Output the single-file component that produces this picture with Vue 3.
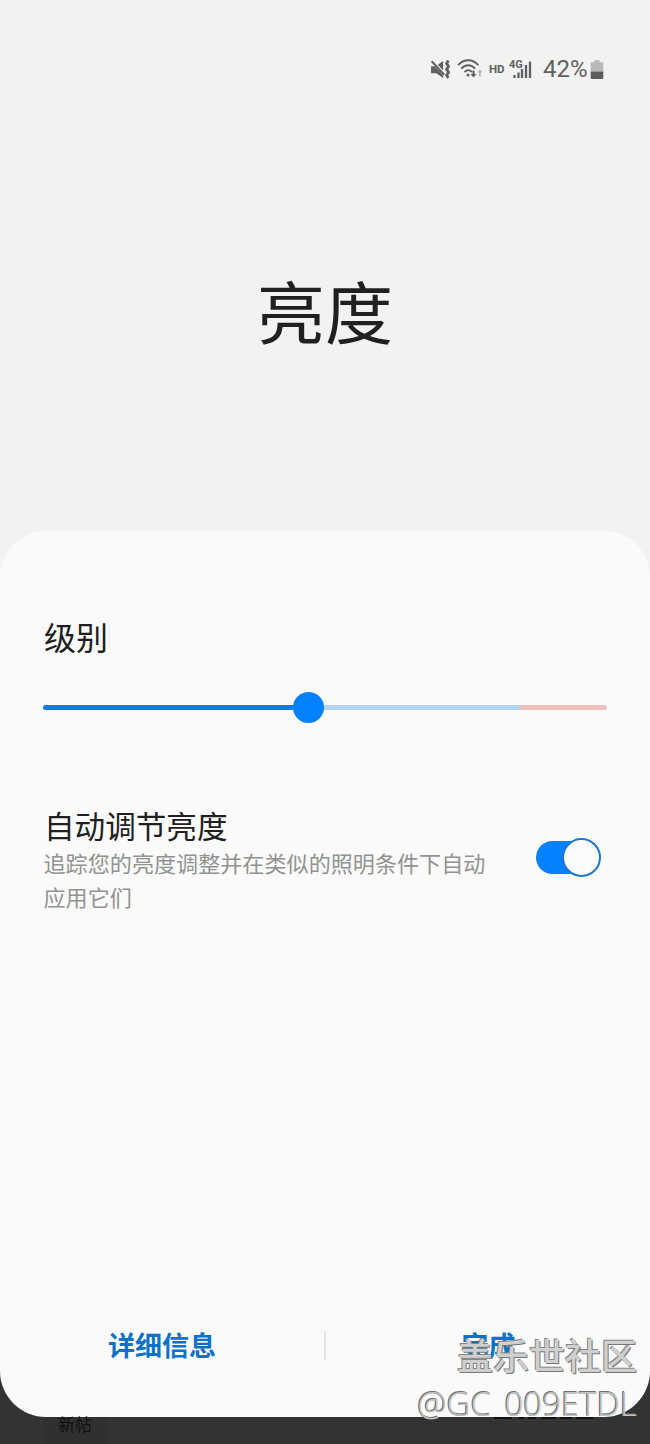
<template>
  <div class="screen">
    <header class="status-bar">
      <svg class="icon mute" viewBox="0 0 20 20" aria-hidden="true">
        <path d="M1 7h3.500l8 8.500V18l-6.500-4.500H1z" fill="#606060" />
        <path d="M7.500 5.500L12.500 2v9z" fill="#606060" />
        <path d="M1.500 2l12 13" stroke="#606060" stroke-width="2" />
        <path d="M17.500 1.500l-1.700 2.800 1.900 2.700-1.900 2.900 1.900 2.700-1.900 2.900 1.700 2.500" fill="none" stroke="#606060" stroke-width="2.600" />
      </svg>
      <svg class="icon wifi" viewBox="0 0 26 20" aria-hidden="true">
        <g fill="none" stroke="#606060" stroke-width="1.900">
          <path d="M1 6.200C7-.4 15.400-.4 21.400 6.200" />
          <path d="M4.200 9.700c4.200-4.700 9.800-4.700 14 0" />
          <path d="M7.500 13c2.400-2.500 5-2.500 7.400 0" />
        </g>
        <circle cx="11" cy="16" r="1.500" fill="#606060" />
        <path d="M15.500 11.500h2v3.500h2l-3 3.500-3-3.500h2z" fill="#606060" />
        <path d="M22 17.500v-4h-1.700l2.600-3.200 2.600 3.200h-1.700v4z" fill="#b5b5b5" />
      </svg>
      <span class="hd">HD</span>
      <svg class="icon signal" viewBox="0 0 23 22" aria-hidden="true">
        <text x="0" y="9.500" class="network">4G</text>
        <path d="M5.500 17v3M9.500 14.500V20M13 11v9M17 7v13M21 3.500V20" stroke="#606060" stroke-width="2.300" />
      </svg>
      <span class="percent">42%</span>
      <svg class="icon battery" viewBox="0 0 13 20" aria-hidden="true">
        <path d="M4 1h5v2h2.500q1 0 1 1v8H.5V4q0-1 1-1H4z" fill="#b9b9b9" />
        <path d="M.5 12h12v6q0 1-1 1h-10q-1 0-1-1z" fill="#5c5c5c" />
      </svg>
    </header>

    <h1 class="title">亮度</h1>

    <main class="panel">
      <h2 class="label">级别</h2>
      <div class="slider">
        <div class="track"></div>
        <div class="fill" :style="{ width: level + '%' }"></div>
        <div class="thumb" :style="{ left: level + '%' }"></div>
      </div>

      <section class="setting">
        <div class="setting-text">
          <h2 class="setting-title">自动调节亮度</h2>
          <p class="setting-desc">追踪您的亮度调整并在类似的照明条件下自动应用它们</p>
        </div>
        <button class="toggle" :class="{ on: auto }" role="switch" :aria-checked="auto" @click="auto = !auto">
          <span class="knob"></span>
        </button>
      </section>

      <footer class="actions">
        <button class="action details">详细信息</button>
        <span class="divider"></span>
        <button class="action done">完成</button>
      </footer>
    </main>

    <div class="page-below">
      <span class="tag">新帖</span>
      <svg class="cut-line" viewBox="0 0 100 3" aria-hidden="true">
        <path d="M0 1h18M25 1h5M34 1h8M47 1h15M66 1h12M82 1h17" stroke="#111" stroke-width="2" />
      </svg>
    </div>

    <div class="watermark" aria-hidden="true">
      <div class="community">盖乐世社区</div>
      <div class="user">@GC<span class="underscore">_</span>009ETDL</div>
    </div>
  </div>
</template>

<script setup>
import { ref } from 'vue'

const level = ref(47)
const auto = ref(true)
</script>

<style>
body {
  margin: 0;
  background: #333;
}
</style>

<style scoped>
.screen {
  position: relative;
  width: 650px;
  height: 1444px;
  overflow: hidden;
  display: flex;
  flex-direction: column;
  background: linear-gradient(#f2f2f2 0 1200px, #333 1200px);
  color: #202020;
  font-family: "Noto Sans CJK SC", sans-serif;
}

h1, h2, p {
  margin: 0;
  font-weight: 400;
}

button {
  padding: 0;
  border: 0;
  background: none;
  font-family: inherit;
}

.status-bar {
  flex: none;
  box-sizing: border-box;
  height: 81px;
  padding: 57px 0 0 430px;
  display: flex;
  align-items: center;
  color: #606060;
  font-family: Roboto, sans-serif;
}

.icon {
  display: block;
  flex: none;
}

.mute { width: 21px; height: 21px; }
.wifi { width: 26px; height: 20px; margin-left: 6px; }
.hd { width: 17px; margin-left: 6px; font-size: 11.5px; font-weight: 700; }
.signal { width: 23px; height: 22px; margin-left: 3px; }
.network { font: 700 11px Roboto, sans-serif; fill: #606060; }
.percent { width: 46px; margin-left: 11px; font-size: 24px; line-height: 24px; }
.battery { width: 14px; height: 21px; margin-left: 1px; }

.title {
  flex: none;
  height: 450px;
  line-height: 457px;
  font-size: 68px;
  text-align: center;
}

.panel {
  flex: none;
  box-sizing: border-box;
  height: 886px;
  padding: 85px 43px 0;
  display: flex;
  flex-direction: column;
  background: #fafafa;
  border-radius: 46px;
}

.label {
  padding-left: 1px;
  font-size: 32px;
  line-height: 40px;
}

.slider {
  position: relative;
  flex: none;
  height: 31px;
  margin-top: 36px;
}

.track, .fill {
  position: absolute;
  top: 13px;
  left: 0;
  height: 5px;
  border-radius: 3px;
}

.track {
  width: 100%;
  background: linear-gradient(90deg, #b2d4f4 84.600%, #f0c0c0 84.600%);
}

.fill { background: #1479e4; }

.thumb {
  position: absolute;
  top: 0;
  width: 31px;
  height: 31px;
  margin-left: -15px;
  border-radius: 50%;
  background: #0381fe;
}

.setting {
  display: flex;
  justify-content: space-between;
  margin-top: 82px;
}

.setting-text { width: 450px; }

.setting-title {
  padding-left: 1px;
  font-size: 30.600px;
  line-height: 40px;
}

.setting-desc {
  padding-left: 0.5px;
  color: #929292;
  font-size: 22.100px;
  line-height: 34px;
}

.toggle {
  position: relative;
  width: 63px;
  height: 33px;
  margin: 36px 8px 0 0;
  border-radius: 17px;
  background: #aaa;
}

.toggle.on { background: #0381fe; }

.knob {
  position: absolute;
  top: -3px;
  left: 0;
  box-sizing: border-box;
  width: 39px;
  height: 39px;
  border: 2px solid #1c78d2;
  border-radius: 50%;
  background: #fcfcfc;
}

.toggle.on .knob { left: 26px; }

.actions {
  display: grid;
  grid-template-columns: 1fr 2px 1fr;
  align-items: center;
  height: 40px;
  margin-top: auto;
  margin-bottom: 52px;
}

.action {
  color: #0a72c8;
  font-size: 27px;
  line-height: 38px;
  font-weight: 700;
}

.details { padding-right: 43px; }
.done { padding-left: 44px; }

.divider {
  height: 29px;
  background: #e5e5e5;
}

.page-below {
  flex: 1;
  display: flex;
  padding-left: 43px;
}

.tag {
  width: 64px;
  height: 27px;
  background: #303030;
  color: #111;
  font-size: 17px;
  line-height: 14px;
  text-align: center;
}

.cut-line {
  width: 100px;
  height: 3px;
  margin-left: 387px;
}

/* signature stamped over the lower right corner */
.watermark {
  position: absolute;
  right: 13px;
  bottom: 18px;
  color: #cfcfcf;
  text-align: right;
  white-space: nowrap;
  pointer-events: none;
}

.community {
  margin-bottom: 6px;
  font-size: 36px;
  line-height: 44px;
  font-weight: 500;
  text-shadow: -1px -1px 0 #858585, 1px 1px 0 #777;
}

.user {
  color: #c4c4c4;
  font-family: "Open Sans", "Noto Sans", sans-serif;
  font-size: 33px;
  line-height: 44px;
  font-weight: 300;
  text-shadow: -1px -1px 0 #707070, -1px 0 0 #858585;
}

.underscore {
  color: #3c3c3c;
  text-shadow: none;
}
</style>
